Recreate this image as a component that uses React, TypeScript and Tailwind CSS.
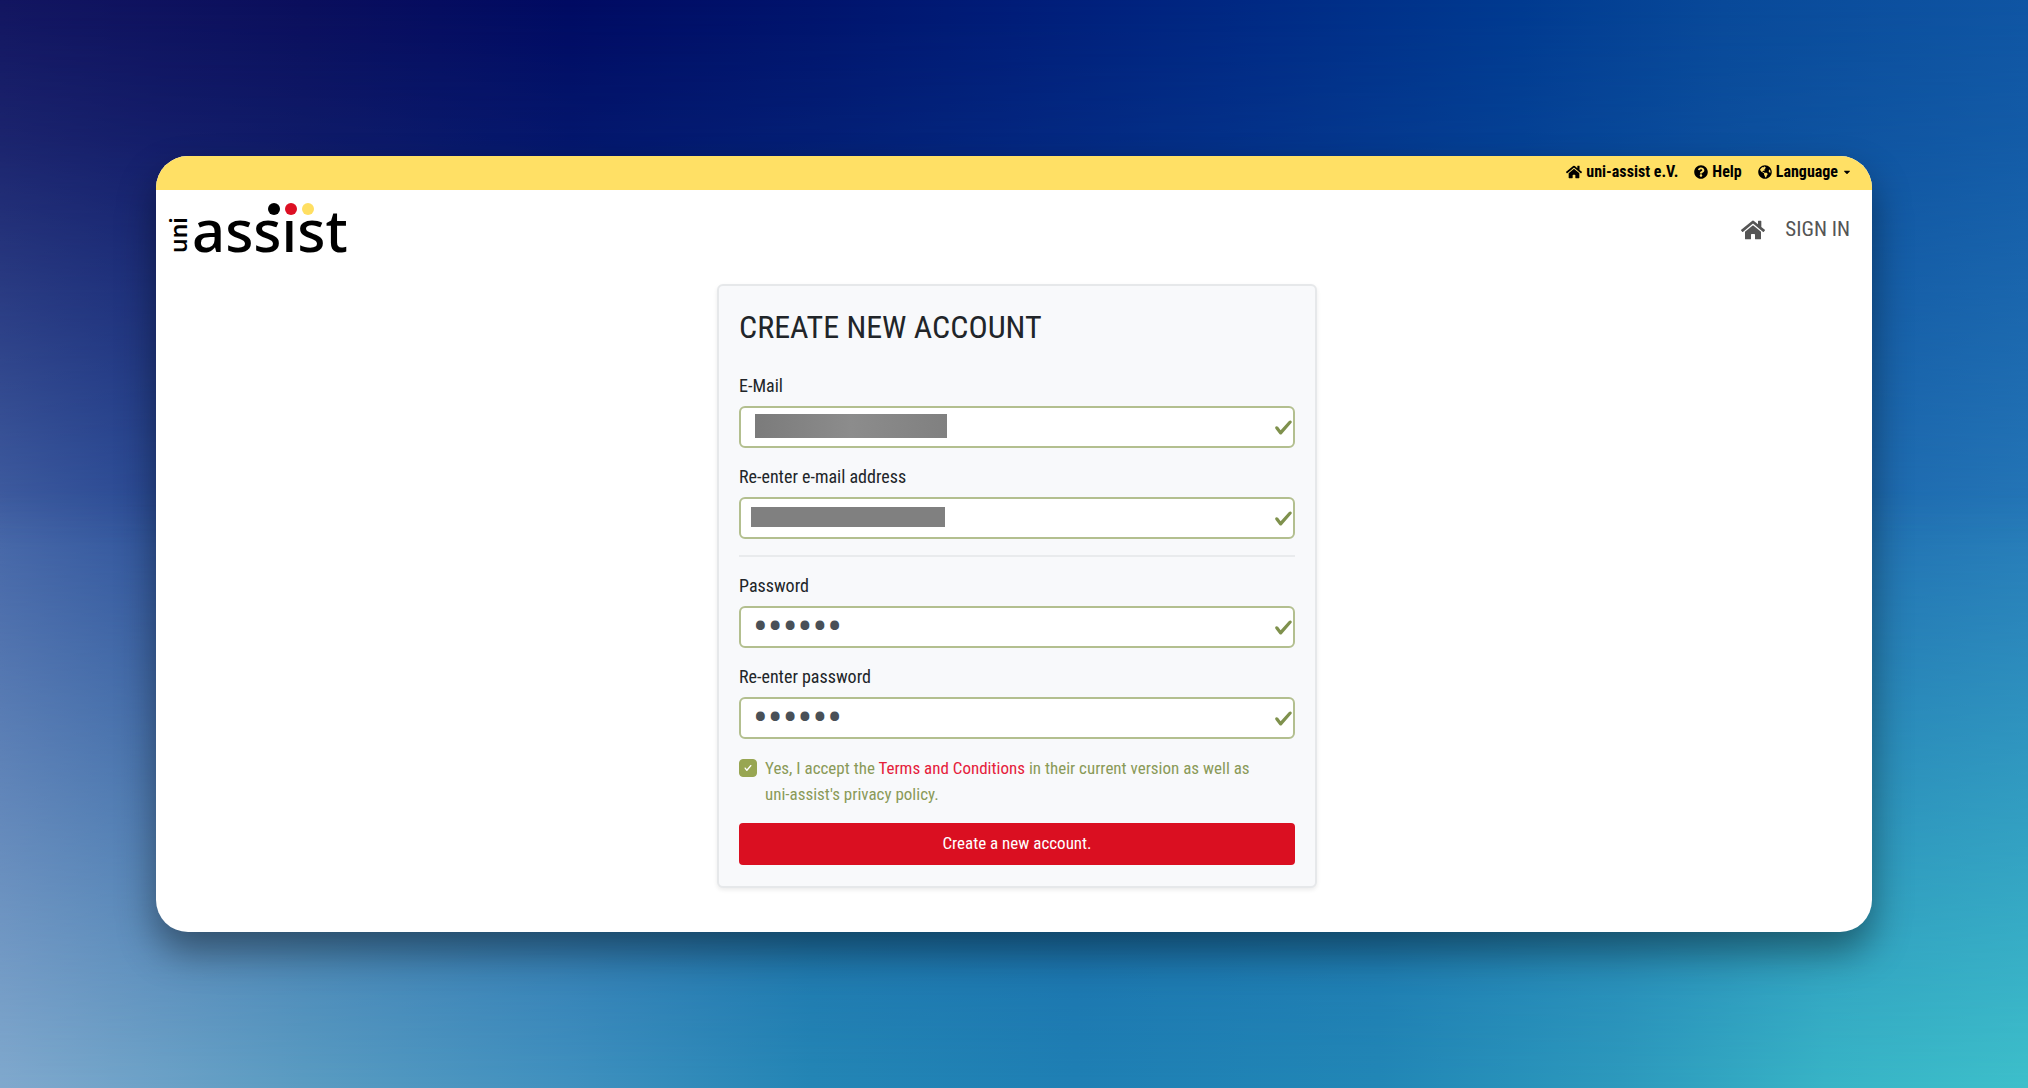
import React, { useState } from 'react';
import { FaCaretDown, FaGlobeAmericas, FaHome, FaQuestionCircle } from 'react-icons/fa';

// Colour wash behind the window: three horizontal bands blended into each other
const Backdrop = () => (
  <div className="absolute inset-0 -z-10" aria-hidden="true">
    <div className="absolute inset-0 bg-[linear-gradient(90deg,#4262a5_0%,#2c4f99_8%,#124a98_30%,#14559f_60%,#1b64ac_85%,#2678b8_100%)]" />
    <div className="absolute inset-0 bg-[linear-gradient(90deg,#121560_0%,#0a0e5c_15%,#000a62_28%,#00136c_40%,#001c78_50%,#002984_62%,#003a90_75%,#084999_85%,#0f55a3_100%)] [mask-image:linear-gradient(180deg,#000_0%,rgba(0,0,0,0.8)_13%,transparent_50%)]" />
    <div className="absolute inset-0 bg-[linear-gradient(90deg,#80a9cd_0%,#5a9cc2_15%,#4091bf_28%,#2486b5_40%,#1f80b4_53%,#2287b6_68%,#2d9abd_80%,#38b4c6_90%,#3dbfca_100%)] [mask-image:linear-gradient(180deg,transparent_45%,#000_100%)]" />
  </div>
);

const Logo = () => (
  <svg width="192" height="80" viewBox="-8 0 192 80" role="img" aria-label="uni-assist">
    <text
      transform="translate(21 63) rotate(-90)"
      className="font-['Noto_Sans'] text-[23px] font-semibold"
    >
      uni
    </text>
    <text x="26" y="62" className="font-['Noto_Sans'] text-[58px] font-medium">
      assist
    </text>
    <rect x="115" y="8" width="20" height="22" fill="#fff" />
    <circle cx="108" cy="19" r="6" fill="#000" />
    <circle cx="125" cy="19" r="6" fill="#dc0f23" />
    <circle cx="142" cy="19" r="6" fill="#ffdf62" />
  </svg>
);

const Check = ({ className }: { className: string }) => (
  <svg viewBox="0 0 8 8" fill="currentColor" className={className} aria-hidden="true">
    <path d="M2.3 6.73L.6 4.53c-.4-1.04.46-1.4 1.1-.8l1.1 1.4 3.4-3.8c.6-.63 1.6-.27 1.2.7l-4 4.6c-.43.5-.8.4-1.1.1z" />
  </svg>
);

type FieldProps = {
  id: string;
  label: string;
  type: 'email' | 'password';
  value: string;
  onChange: (value: string) => void;
  redaction?: string;
};

const Field = ({ id, label, type, value, onChange, redaction }: FieldProps) => (
  <div className="mb-4">
    <label htmlFor={id} className="mb-2 block text-[18px] leading-[25px]">
      {label}
    </label>
    <div className="relative">
      <input
        id={id}
        type={type}
        value={value}
        onChange={(e) => onChange(e.target.value)}
        className="block h-[42px] w-full rounded-md border-2 border-[#b3bf8f] bg-white px-3 font-['Roboto'] text-[44px] leading-none text-[#495057] outline-none"
      />
      {redaction && <span className={`absolute ${redaction}`} />}
      <Check className="absolute top-3 right-0.5 size-[19px] text-[#7f914d]" />
    </div>
  </div>
);

export default function App() {
  const [email, setEmail] = useState('');
  const [emailRepeat, setEmailRepeat] = useState('');
  const [password, setPassword] = useState('secret');
  const [passwordRepeat, setPasswordRepeat] = useState('secret');
  const [accepted, setAccepted] = useState(true);

  return (
    <div className="relative isolate flex min-h-screen flex-col px-[156px] py-[156px] font-['Roboto_Condensed',sans-serif] text-[17px] text-[#212529]">
      <Backdrop />
      <div className="flex-1 overflow-hidden rounded-[32px] bg-white pb-[42px] shadow-[0_20px_38px_rgba(0,0,0,0.42)]">
        <nav className="flex h-[34px] items-center justify-end gap-4 bg-[#ffe065] pr-5 pb-0.5 text-base font-bold text-black">
          <a href="#" className="flex items-center gap-1">
            <FaHome className="size-4" />
            uni-assist e.V.
          </a>
          <a href="#" className="flex items-center gap-1">
            <FaQuestionCircle className="size-3.5" />
            Help
          </a>
          <button type="button" className="flex items-center gap-1">
            <FaGlobeAmericas className="size-3.5" />
            Language
            <FaCaretDown className="size-2.5" />
          </button>
        </nav>

        <header className="flex h-20 items-center justify-between pr-[22px] pl-0.5">
          <a href="#">
            <Logo />
          </a>
          <div className="flex items-center gap-5 text-[21px] text-[#555]">
            <a href="#" aria-label="Home">
              <FaHome className="size-6" />
            </a>
            <a href="#">SIGN IN</a>
          </div>
        </header>

        <main className="mt-[14px] flex justify-center pl-1.5">
          <form
            onSubmit={(e) => e.preventDefault()}
            className="w-full max-w-[600px] rounded-md border-2 border-[#e6e8ea] bg-[#f8f9fb] px-5 pt-[21px] pb-[21px] shadow-[0_2px_4px_rgba(0,0,0,0.08)]"
          >
            <h1 className="mb-[26px] text-[32px] leading-10">CREATE NEW ACCOUNT</h1>
            <Field
              id="email"
              label="E-Mail"
              type="email"
              value={email}
              onChange={setEmail}
              redaction="top-2 left-4 h-6 w-48 bg-linear-to-r from-[#7b7b7b] via-[#8c8c8c] to-[#808080]"
            />
            <Field
              id="email-repeat"
              label="Re-enter e-mail address"
              type="email"
              value={emailRepeat}
              onChange={setEmailRepeat}
              redaction="top-2.5 left-3 h-5 w-[194px] bg-[#808080]"
            />
            <hr className="mb-4 border-t-2 border-[#e9ebed]" />
            <Field id="password" label="Password" type="password" value={password} onChange={setPassword} />
            <Field
              id="password-repeat"
              label="Re-enter password"
              type="password"
              value={passwordRepeat}
              onChange={setPasswordRepeat}
            />
            <div className="flex gap-2 pr-6 text-[#8a9a58]">
              <span className="relative mt-1 block size-[18px] shrink-0">
                <input
                  id="terms"
                  type="checkbox"
                  checked={accepted}
                  onChange={(e) => setAccepted(e.target.checked)}
                  className="block size-[18px] appearance-none rounded-sm border border-[#98a652] checked:bg-[#98a652]"
                />
                {accepted && <Check className="pointer-events-none absolute inset-[5px] size-2 text-white" />}
              </span>
              <label htmlFor="terms" className="leading-[26px]">
                Yes, I accept the{' '}
                <a href="#" className="text-[#e5203a]">
                  Terms and Conditions
                </a>{' '}
                in their current version as well as uni-assist's privacy policy.
              </label>
            </div>
            <button
              type="submit"
              className="mt-4 block h-[42px] w-full rounded-sm bg-[#da0f21] text-center text-white"
            >
              Create a new account.
            </button>
          </form>
        </main>
      </div>
    </div>
  );
}
